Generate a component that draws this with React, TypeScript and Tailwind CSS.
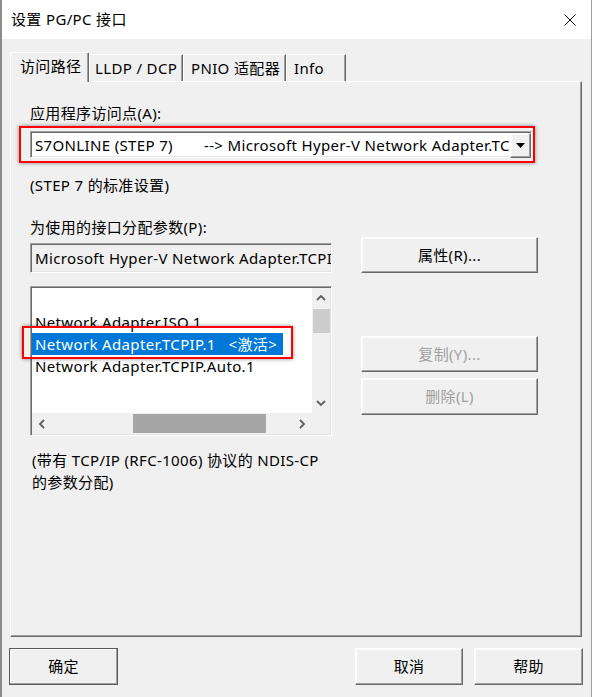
import React from "react";

// classic win32 3d edges
const raised =
  "border border-t-white border-l-white border-r-[#696969] border-b-[#696969] shadow-[inset_-1px_-1px_#a0a0a0,inset_1px_1px_#fbfbfb]";
const sunken =
  "border border-t-[#a0a0a0] border-l-[#a0a0a0] border-r-white border-b-white shadow-[inset_1px_1px_#696969,inset_-1px_-1px_#e3e3e3]";
const redMark =
  "absolute border-2 border-[#ff0000] shadow-[0_0_4px_rgba(0,0,0,0.45)] pointer-events-none";

const Chevron: React.FC<{ dir: "up" | "down" | "left" | "right" }> = ({ dir }) => {
  const d = {
    up: "M1 6 L5 2 L9 6",
    down: "M1 2 L5 6 L9 2",
    left: "M6 1 L2 5 L6 9",
    right: "M2 1 L6 5 L2 9",
  }[dir];
  const vertical = dir === "up" || dir === "down";
  return (
    <svg
      width={vertical ? 10 : 8}
      height={vertical ? 8 : 10}
      viewBox={vertical ? "0 0 10 8" : "0 0 8 10"}
      fill="none"
      stroke="#606060"
      strokeWidth="1.8"
    >
      <path d={d} />
    </svg>
  );
};

const Button: React.FC<{
  label: string;
  disabled?: boolean;
  className?: string;
}> = ({ label, disabled, className }) => (
  <div
    className={`${raised} bg-[#f0f0f0] flex items-center justify-center ${
      disabled ? "text-[#a0a0a0]" : "text-black"
    } ${className ?? ""}`}
  >
    {label}
  </div>
);

const Tab: React.FC<{ label: string; active?: boolean; className: string }> = ({
  label,
  active,
  className,
}) =>
  active ? (
    <div
      className={`relative z-10 -mb-[1px] h-[30px] pt-[3px] leading-[20px] bg-[#f0f0f0] border-t border-l border-t-white border-l-white border-r border-r-[#696969] rounded-t-[2px] shadow-[inset_-1px_0_#a0a0a0] ${className}`}
    >
      {label}
    </div>
  ) : (
    <div
      className={`h-[27px] flex items-center bg-[#f0f0f0] border-t border-l border-t-white border-l-white border-r border-r-[#696969] shadow-[inset_-1px_0_#a0a0a0] ${className}`}
    >
      {label}
    </div>
  );

export default function App() {
  return (
    <div className="w-[592px] h-[697px] overflow-hidden bg-[#f0f0f0] border-l-2 border-l-[#8c8c8c] border-r border-r-[#a0a0a0] text-[15px] tracking-[0.35px] text-black font-['Noto_Sans','Noto_Sans_CJK_SC',sans-serif]">
      {/* Title bar */}
      <div className="h-[39px] bg-white flex items-center justify-between pl-[9px] pr-[15px]">
        <span>设置 PG/PC 接口</span>
        <svg width="12" height="12" viewBox="0 0 12 12" stroke="#000" strokeWidth="1">
          <path d="M0.5 0.5 L11.5 11.5 M11.5 0.5 L0.5 11.5" />
        </svg>
      </div>

      <div className="pl-[8px] pr-[9px]">
        {/* Tabs */}
        <div className="mt-[13px] h-[29px] flex items-end">
          <Tab label="访问路径" active className="w-[79px] pl-[9px]" />
          <Tab label="LLDP / DCP" className="w-[94px] pl-[5px]" />
          <Tab label="PNIO 适配器" className="w-[103px] pl-[7px]" />
          <Tab label="Info" className="w-[60px] pl-[7px]" />
        </div>

        {/* Tab panel */}
        <div className="h-[556px] border border-t-white border-l-white border-r-[#696969] border-b-[#696969] shadow-[inset_-1px_-1px_#a0a0a0] pl-[19px]">
          <div className="mt-[21px] leading-[20px]">应用程序访问点(A):</div>

          {/* Combo box */}
          <div className={`relative mt-[8px] w-[502px] h-[27px] bg-white flex ${sunken}`}>
            <div className="flex-1 overflow-hidden whitespace-nowrap flex items-center pl-[4px] pt-[1px]">
              <span className="w-[169px] shrink-0">S7ONLINE (STEP 7)</span>
              <span>--&gt; Microsoft Hyper-V Network Adapter.TCPIP.1</span>
            </div>
            <div className={`w-[21px] h-[25px] mt-[1px] bg-[#f0f0f0] flex items-center justify-center ${raised}`}>
              <svg width="9" height="5" viewBox="0 0 9 5">
                <path d="M0 0 H9 L4.5 5 Z" fill="#000" />
              </svg>
            </div>
            <div className={`${redMark} left-[-12px] top-[-6px] right-[-4px] bottom-[-6px]`} />
          </div>

          <div className="mt-[17px] leading-[20px]">(STEP 7 的标准设置)</div>
          <div className="mt-[22px] leading-[20px]">为使用的接口分配参数(P):</div>

          {/* Interface parameter field + properties */}
          <div className="flex items-start">
            <div
              className={`mt-[6px] w-[302px] h-[30px] bg-[#f0f0f0] overflow-hidden whitespace-nowrap flex items-center pl-[4px] ${sunken}`}
            >
              Microsoft Hyper-V Network Adapter.TCPIP.1
            </div>
            <Button label="属性(R)..." className="ml-[29px] w-[177px] h-[36px]" />
          </div>

          {/* List + copy/delete */}
          <div className="mt-[13px] flex items-start">
            <div className={`w-[302px] h-[150px] flex flex-col ${sunken} p-[1px]`}>
              <div className="flex flex-1">
                <div className="flex-1 bg-white leading-[22px]">
                  <div className="h-[23px]" />
                  <div className="pl-[3px]">Network Adapter.ISO.1</div>
                  <div className="relative w-fit h-[22px] bg-[#0078d7] text-white pl-[3px] pr-[6px] whitespace-pre">
                    Network Adapter.TCPIP.1   &lt;激活&gt;
                    <div className={`${redMark} left-[-10px] top-[-7px] right-[-10px] bottom-[-4px]`} />
                  </div>
                  <div className="pl-[3px]">Network Adapter.TCPIP.Auto.1</div>
                </div>
                <div className="w-[18px] bg-[#f0f0f0] flex flex-col items-center">
                  <div className="h-[20px] flex items-center justify-center">
                    <Chevron dir="up" />
                  </div>
                  <div className="mt-[1px] w-[17px] h-[24px] bg-[#cdcdcd]" />
                  <div className="flex-1" />
                  <div className="h-[20px] flex items-center justify-center">
                    <Chevron dir="down" />
                  </div>
                </div>
              </div>
              <div className="h-[21px] flex bg-[#f0f0f0]">
                <div className="w-[20px] flex items-center justify-center">
                  <Chevron dir="left" />
                </div>
                <div className="ml-[81px] mt-[1px] w-[133px] h-[19px] bg-[#a6a6a6]" />
                <div className="flex-1" />
                <div className="w-[20px] flex items-center justify-center">
                  <Chevron dir="right" />
                </div>
                <div className="w-[18px]" />
              </div>
            </div>

            <div className="ml-[29px] pt-[50px] flex flex-col gap-[6px]">
              <Button label="复制(Y)..." disabled className="w-[177px] h-[36px]" />
              <Button label="删除(L)" disabled className="w-[177px] h-[37px]" />
            </div>
          </div>

          <div className="mt-[13px] leading-[22px] pl-[2px]">
            <div>(带有 TCP/IP (RFC-1006) 协议的 NDIS-CP</div>
            <div>的参数分配)</div>
          </div>
        </div>

        {/* Dialog buttons */}
        <div className="mt-[11px] flex -ml-[1px] -mr-[1px]">
          <Button
            label="确定"
            className="w-[109px] h-[37px] outline outline-1 outline-[#5a5a5a] -outline-offset-1"
          />
          <div className="flex-1" />
          <Button label="取消" className="w-[108px] h-[37px]" />
          <Button label="帮助" className="ml-[11px] w-[109px] h-[37px]" />
        </div>
      </div>
    </div>
  );
}
